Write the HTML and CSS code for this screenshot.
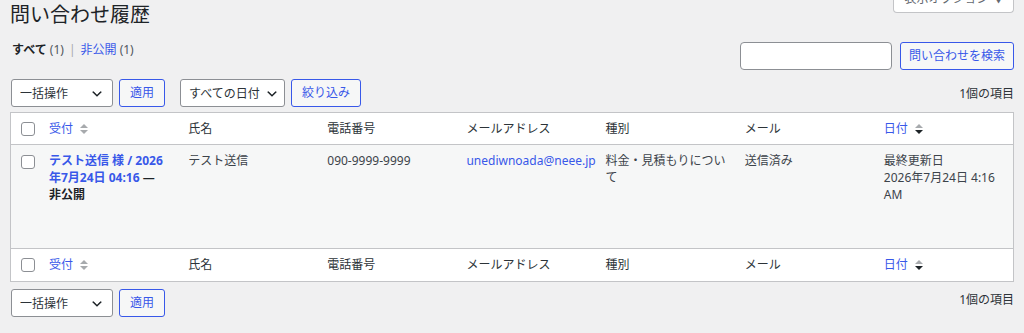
FILE: index.html
```html
<!DOCTYPE html>
<html lang="ja">
<head>
  <meta charset="UTF-8">
  <title>問い合わせ履歴</title>
  <meta name="viewport" content="width=device-width, initial-scale=1.0">
  <link rel="stylesheet" href="styles.css">
</head>
<body>
  <div class="wrap">
    <div class="page-head">
      <h1>問い合わせ履歴</h1>
      <button class="screen-options" type="button">表示オプション <span class="caret">▼</span></button>
    </div>

    <div class="filter-bar">
      <ul class="subsubsub">
        <li><span class="current">すべて</span> <span class="count">(1)</span></li>
        <li><a href="#">非公開</a> <span class="count">(1)</span></li>
      </ul>
      <form class="search-box" onsubmit="return false">
        <input type="search" aria-label="問い合わせを検索">
        <button class="button" type="submit">問い合わせを検索</button>
      </form>
    </div>

    <div class="tablenav top">
      <div class="actions">
        <select class="bulk-select"><option>一括操作</option></select>
        <button class="button" type="button">適用</button>
      </div>
      <div class="actions">
        <select class="date-select"><option>すべての日付</option></select>
        <button class="button" type="button">絞り込み</button>
      </div>
      <span class="displaying-num">1個の項目</span>
    </div>

    <table class="list-table">
      <colgroup>
        <col class="col-cb">
        <col><col><col><col><col><col><col>
      </colgroup>
      <thead>
        <tr>
          <th class="check-column"><input type="checkbox" aria-label="すべて選択"></th>
          <th><a href="#" class="sortable">受付<svg class="sort" width="8" height="12" viewBox="0 0 8 12"><path class="up" d="M0 5L4 1L8 5Z"/><path class="down" d="M0 7L4 11L8 7Z"/></svg></a></th>
          <th>氏名</th>
          <th>電話番号</th>
          <th>メールアドレス</th>
          <th>種別</th>
          <th>メール</th>
          <th><a href="#" class="sortable sorted">日付<svg class="sort" width="8" height="12" viewBox="0 0 8 12"><path class="up" d="M0 5L4 1L8 5Z"/><path class="down" d="M0 7L4 11L8 7Z"/></svg></a></th>
        </tr>
      </thead>
      <tbody>
        <tr class="entry">
          <td class="check-column"><input type="checkbox" aria-label="選択"></td>
          <td><strong><a href="#" class="row-title">テスト送信 様 / 2026年7月24日 04:16</a> — <span class="post-state">非公開</span></strong></td>
          <td>テスト送信</td>
          <td>090-9999-9999</td>
          <td><a href="#">unediwnoada@neee.jp</a></td>
          <td>料金・見積もりについて</td>
          <td>送信済み</td>
          <td>最終更新日<br>2026年7月24日 4:16 AM</td>
        </tr>
      </tbody>
      <tfoot>
        <tr>
          <th class="check-column"><input type="checkbox" aria-label="すべて選択"></th>
          <th><a href="#" class="sortable">受付<svg class="sort" width="8" height="12" viewBox="0 0 8 12"><path class="up" d="M0 5L4 1L8 5Z"/><path class="down" d="M0 7L4 11L8 7Z"/></svg></a></th>
          <th>氏名</th>
          <th>電話番号</th>
          <th>メールアドレス</th>
          <th>種別</th>
          <th>メール</th>
          <th><a href="#" class="sortable sorted">日付<svg class="sort" width="8" height="12" viewBox="0 0 8 12"><path class="up" d="M0 5L4 1L8 5Z"/><path class="down" d="M0 7L4 11L8 7Z"/></svg></a></th>
        </tr>
      </tfoot>
    </table>

    <div class="tablenav bottom">
      <div class="actions">
        <select class="bulk-select"><option>一括操作</option></select>
        <button class="button" type="button">適用</button>
      </div>
      <span class="displaying-num">1個の項目</span>
    </div>
  </div>
</body>
</html>
```

FILE: styles.css
```css
* {
  box-sizing: border-box;
}
body {
  margin: 0;
  background: #f0f0f1;
  color: #3c434a;
  font-family: "Noto Sans", "Noto Sans CJK JP", sans-serif;
  font-size: 12px;
  line-height: 17px;
}
a {
  color: #3858e9;
  text-decoration: none;
}
.wrap {
  padding: 0 10px;
}
.page-head {
  display: flex;
  justify-content: space-between;
  align-items: flex-start;
  height: 30px;
}
h1 {
  margin: 0;
  font-size: 20px;
  font-weight: 400;
  line-height: 30px;
  color: #1d2327;
}
.screen-options {
  margin-top: -15px;
  width: 121px;
  height: 28px;
  padding: 0 6px;
  background: #fff;
  border: 1px solid #c3c4c7;
  border-top: none;
  border-radius: 0 0 4px 4px;
  color: #646970;
  font: inherit;
  font-size: 12px;
  line-height: 28px;
  white-space: nowrap;
}
.caret {
  font-size: 8px;
  margin-left: 3px;
}
.filter-bar {
  display: flex;
  justify-content: space-between;
  align-items: flex-start;
  margin-top: 12px;
}
.subsubsub {
  list-style: none;
  margin: 0;
  padding: 0 0 0 2px;
  display: flex;
  line-height: 16px;
}
.subsubsub li + li::before {
  content: "|";
  color: #a7aaad;
  margin: 0 5px;
}
.current {
  font-weight: 700;
  color: #1d2327;
}
.count {
  color: #50575e;
}
.search-box {
  display: flex;
  gap: 8px;
  margin: 0;
}
.search-box input {
  width: 152px;
  height: 28px;
  margin: 0;
  border: 1px solid #8c8f94;
  border-radius: 4px;
  background: #fff;
}
.search-box .button {
  padding: 0 8px;
}
.button {
  height: 28px;
  margin: 0;
  padding: 0 10px;
  border: 1px solid #3858e9;
  border-radius: 3px;
  background: #f6f7f7;
  color: #3858e9;
  font: inherit;
  font-size: 12px;
  line-height: 26px;
  cursor: pointer;
}
select {
  height: 28px;
  margin: 0;
  padding: 0 22px 0 8px;
  border: 1px solid #8c8f94;
  border-radius: 3px;
  background: #fff url("data:image/svg+xml,%3Csvg xmlns='http://www.w3.org/2000/svg' width='20' height='20' viewBox='0 0 20 20'%3E%3Cpath d='M5 6l5 5 5-5 2 1-7 7-7-7z' fill='%231d2327'/%3E%3C/svg%3E") no-repeat right 5px top 55%;
  background-size: 14px 14px;
  color: #2c3338;
  font: inherit;
  font-size: 12px;
  -webkit-appearance: none;
  appearance: none;
}
.bulk-select {
  width: 102px;
  padding-right: 24px;
  background-position: right 8px top 55%;
}
.tablenav {
  display: flex;
  align-items: center;
  height: 28px;
}
.tablenav.top {
  margin-top: 9px;
}
.tablenav.bottom {
  margin-top: 7px;
  padding-left: 1px;
}
.tablenav.top .actions:first-child {
  padding-left: 1px;
}
.actions {
  display: flex;
  gap: 6px;
  margin-right: 15px;
}
.displaying-num {
  margin-left: auto;
  color: #2c3338;
}
.tablenav.bottom .displaying-num {
  align-self: flex-start;
  padding-top: 2px;
}
.list-table {
  width: 100%;
  margin-top: 5px;
  border: 1px solid #c3c4c7;
  border-spacing: 0;
  table-layout: fixed;
  background: #fff;
}
.col-cb {
  width: 28px;
}
th, td {
  padding: 8px 8px 8px 10px;
  text-align: left;
  vertical-align: top;
}
th {
  font-weight: 400;
  color: #2c3338;
  line-height: 16px;
  vertical-align: middle;
}
thead th {
  padding-bottom: 7px;
  border-bottom: 1px solid #c3c4c7;
}
tfoot th {
  border-top: 1px solid #c3c4c7;
}
.entry td {
  height: 103px;
  padding-top: 7px;
  background: #f6f7f7;
  color: #3c434a;
}
.check-column {
  padding: 0 0 0 10px;
}
.entry td.check-column {
  padding-top: 10px;
}
input[type="checkbox"] {
  display: block;
  width: 14px;
  height: 14px;
  margin: 0;
  border: 1px solid #8c8f94;
  border-radius: 3px;
  background: #fff;
  -webkit-appearance: none;
  appearance: none;
}
.sortable {
  display: inline-flex;
  align-items: center;
}
.sort {
  margin-left: 7px;
}
.sort path {
  fill: #a7aaad;
}
.sorted .sort .down {
  fill: #1d2327;
}
strong {
  font-weight: 700;
  color: #1d2327;
}
.row-title {
  font-weight: 700;
}
.post-state {
  white-space: nowrap;
}
```
